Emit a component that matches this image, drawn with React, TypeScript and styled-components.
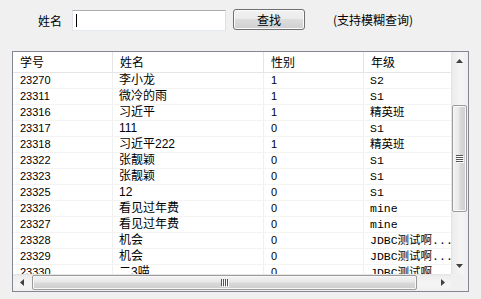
import React from "react";
import styled, { createGlobalStyle } from "styled-components";

const GlobalStyle = createGlobalStyle`
  html, body { margin: 0; padding: 0; background: #f0f0f0; }
  body { font-family: "Noto Sans CJK SC", sans-serif; font-size: 12px; color: #000; }
`;

const Page = styled.div`
  width: 481px;
  height: 299px;
  overflow: hidden;
  padding: 9px 12px 0;
  box-sizing: border-box;
  background: #f0f0f0;
`;

const Toolbar = styled.div`
  display: flex;
  align-items: flex-start;
  height: 22px;
  padding-left: 26px;
`;

const Label = styled.span`
  width: 24px;
  font-size: 12px;
  line-height: 21px;
  margin-top: 1px;
`;

const SearchBox = styled.div`
  position: relative;
  margin: 1px 0 0 10px;
  width: 154px;
  height: 21px;
  box-sizing: border-box;
  border: 1px solid;
  border-color: #abadb3 #dbdfe6 #e3e9ef #e2e3ea;
  background: #fff;
  &::after {
    content: "";
    position: absolute;
    left: 3px;
    top: 3px;
    width: 1px;
    height: 13px;
    background: #000;
  }
`;

const SearchInput = styled.input`
  width: 100%;
  height: 100%;
  border: none;
  outline: none;
  padding: 0 4px;
  box-sizing: border-box;
  background: transparent;
  font: 12px "Noto Sans CJK SC", sans-serif;
`;

const Button = styled.button`
  margin-left: 7px;
  width: 72px;
  height: 21px;
  box-sizing: border-box;
  border: 1px solid #707070;
  border-radius: 3px;
  padding: 0;
  background: linear-gradient(#f2f2f2 0%, #ebebeb 50%, #dddddd 50%, #cfcfcf 100%);
  box-shadow: inset 0 0 0 1px #fbfbfb;
  font: 12px "Noto Sans CJK SC", sans-serif;
  color: #000;
  line-height: 19px;
`;

const Hint = styled.span`
  margin-left: 28px;
  font-size: 12px;
  line-height: 21px;
`;

const TableBox = styled.div`
  margin-top: 20px;
  width: 457px;
  height: 241px;
  box-sizing: border-box;
  border: 1px solid #828790;
  background: #fff;
  display: grid;
  grid-template-columns: 1fr 17px;
  grid-template-rows: 1fr 17px;
`;

const Content = styled.div`
  overflow: hidden;
  min-width: 0;
  min-height: 0;
`;

const HeaderRow = styled.div`
  display: flex;
  height: 21px;
  box-sizing: border-box;
  border-bottom: 1px solid #e5e5e5;
`;

const HeaderCell = styled.div<{ $w: number }>`
  flex: 0 0 ${(p) => p.$w}px;
  box-sizing: border-box;
  padding-left: 7px;
  border-right: 1px solid #e5e5e5;
  line-height: 20px;
  font-size: 12px;
  white-space: nowrap;
`;

const Row = styled.div`
  display: flex;
  height: 16px;
  box-sizing: border-box;
  border-bottom: 1px solid #f3f3f3;
`;

type Kind = "num" | "cjk" | "mono";

const Cell = styled.div<{ $w: number; $kind: Kind }>`
  flex: 0 0 ${(p) => p.$w}px;
  box-sizing: border-box;
  padding-left: ${(p) => (p.$kind === "num" ? 7 : 6)}px;
  border-right: 1px solid #f0f0f0;
  line-height: 15px;
  white-space: nowrap;
  overflow: hidden;
  font-family: ${(p) =>
    p.$kind === "num"
      ? '"Liberation Sans", sans-serif'
      : p.$kind === "mono"
      ? '"Liberation Mono", "Noto Sans CJK SC", monospace'
      : '"Liberation Sans", "Noto Sans CJK SC", sans-serif'};
  font-size: ${(p) => (p.$kind === "num" ? 11 : p.$kind === "mono" ? 11.5 : 12)}px;
`;

const VScroll = styled.div`
  display: flex;
  flex-direction: column;
  background: linear-gradient(to right, #e2e2e2 0, #ededed 2px, #f5f5f5 60%, #efefef 100%);
`;

const HScroll = styled.div`
  display: flex;
  background: linear-gradient(to bottom, #e2e2e2 0, #ededed 2px, #f5f5f5 60%, #efefef 100%);
`;

const ArrowBtn = styled.div`
  flex: 0 0 17px;
  width: 17px;
  height: 17px;
  display: flex;
  align-items: center;
  justify-content: center;
`;

const Spacer = styled.div`
  flex: 1;
`;

const Thumb = styled.div<{ $dir: "v" | "h" }>`
  box-sizing: border-box;
  border: 1px solid #9b9b9b;
  border-radius: 2px;
  display: flex;
  align-items: center;
  justify-content: center;
  ${(p) =>
    p.$dir === "v"
      ? `width: 15px; margin: 36px 0 0 1px; height: 107px;
         background: linear-gradient(to right, #f3f3f3 0%, #e8e8e8 45%, #d9d9d9 55%, #cdcdcd 100%);`
      : `height: 15px; margin: 1px 0 0 2px; width: 385px;
         background: linear-gradient(to bottom, #f3f3f3 0%, #e8e8e8 45%, #d9d9d9 55%, #cdcdcd 100%);`}
  box-shadow: inset 0 0 0 1px #f8f8f8;
`;

const Corner = styled.div`
  background: #f0f0f0;
`;

const Arrow = ({ dir }: { dir: "up" | "down" | "left" | "right" }) => {
  const pts = {
    up: "0,4 7,4 3.5,0",
    down: "0,0 7,0 3.5,4",
    left: "4,0 4,7 0,3.5",
    right: "0,0 0,7 4,3.5",
  }[dir];
  const w = dir === "up" || dir === "down" ? 7 : 4;
  const h = dir === "up" || dir === "down" ? 4 : 7;
  return (
    <svg width={w} height={h} viewBox={`0 0 ${w} ${h}`}>
      <polygon points={pts} fill="#404040" />
    </svg>
  );
};

const Grip = ({ dir }: { dir: "v" | "h" }) =>
  dir === "v" ? (
    <svg width="8" height="8" viewBox="0 0 8 8">
      {[0, 2, 4, 6].map((y) => (
        <rect key={y} x="0" y={y} width="7" height="1" fill="#555" />
      ))}
      {[1, 3, 5, 7].map((y) => (
        <rect key={y} x="1" y={y} width="7" height="1" fill="#fff" />
      ))}
    </svg>
  ) : (
    <svg width="8" height="8" viewBox="0 0 8 8">
      {[0, 2, 4, 6].map((x) => (
        <rect key={x} x={x} y="0" width="1" height="7" fill="#555" />
      ))}
      {[1, 3, 5, 7].map((x) => (
        <rect key={x} x={x} y="1" width="1" height="7" fill="#fff" />
      ))}
    </svg>
  );

const columns: { title: string; w: number; kind: Kind }[] = [
  { title: "学号", w: 100, kind: "num" },
  { title: "姓名", w: 151, kind: "cjk" },
  { title: "性别", w: 100, kind: "num" },
  { title: "年级", w: 110, kind: "mono" },
];

const rows: string[][] = [
  ["23270", "李小龙", "1", "S2"],
  ["23311", "微冷的雨", "1", "S1"],
  ["23316", "习近平", "1", "精英班"],
  ["23317", "111", "0", "S1"],
  ["23318", "习近平222", "1", "精英班"],
  ["23322", "张靓颖", "0", "S1"],
  ["23323", "张靓颖", "0", "S1"],
  ["23325", "12", "0", "S1"],
  ["23326", "看见过年费", "0", "mine"],
  ["23327", "看见过年费", "0", "mine"],
  ["23328", "机会", "0", "JDBC测试啊..."],
  ["23329", "机会", "0", "JDBC测试啊..."],
  ["23330", "二3喵", "0", "JDBC测试啊..."],
];

export default function App() {
  return (
    <>
      <GlobalStyle />
      <Page>
        <Toolbar>
          <Label>姓名</Label>
          <SearchBox>
            <SearchInput defaultValue="" />
          </SearchBox>
          <Button>查找</Button>
          <Hint>(支持模糊查询)</Hint>
        </Toolbar>
        <TableBox>
          <Content>
            <HeaderRow>
              {columns.map((c) => (
                <HeaderCell key={c.title} $w={c.w}>
                  {c.title}
                </HeaderCell>
              ))}
            </HeaderRow>
            {rows.map((r) => (
              <Row key={r[0]}>
                {r.map((v, i) => (
                  <Cell key={i} $w={columns[i].w} $kind={columns[i].kind}>
                    {v}
                  </Cell>
                ))}
              </Row>
            ))}
          </Content>
          <VScroll>
            <ArrowBtn>
              <Arrow dir="up" />
            </ArrowBtn>
            <Thumb $dir="v">
              <Grip dir="v" />
            </Thumb>
            <Spacer />
            <ArrowBtn>
              <Arrow dir="down" />
            </ArrowBtn>
          </VScroll>
          <HScroll>
            <ArrowBtn>
              <Arrow dir="left" />
            </ArrowBtn>
            <Thumb $dir="h">
              <Grip dir="h" />
            </Thumb>
            <Spacer />
            <ArrowBtn>
              <Arrow dir="right" />
            </ArrowBtn>
          </HScroll>
          <Corner />
        </TableBox>
      </Page>
    </>
  );
}
